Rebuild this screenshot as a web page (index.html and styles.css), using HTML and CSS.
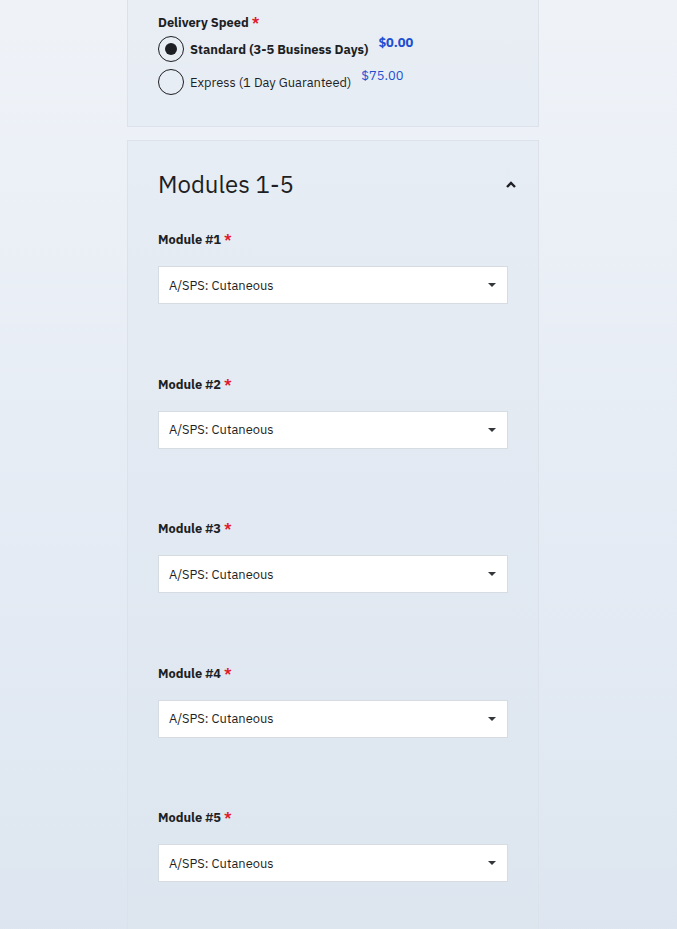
FILE: index.html
```html
<!DOCTYPE html>
<html lang="en">
<head>
<meta charset="utf-8">
<title>Order form</title>
<link rel="stylesheet" href="styles.css">
</head>
<body>
<main class="column">
  <section class="card card-delivery">
    <div class="field-label">Delivery Speed <span class="req">*</span></div>
    <div class="radio-list">
      <label class="radio-row">
        <span class="radio checked"></span>
        <span class="radio-text bold">Standard (3-5 Business Days)</span>
        <span class="price bold">$0.00</span>
      </label>
      <label class="radio-row">
        <span class="radio"></span>
        <span class="radio-text">Express (1 Day Guaranteed)</span>
        <span class="price">$75.00</span>
      </label>
    </div>
  </section>

  <section class="card card-modules">
    <header class="card-head">
      <h2 class="card-title">Modules 1-5</h2>
      <svg class="chevron" width="10" height="7" viewBox="0 0 10 7"><path d="M1 6 L5 2 L9 6" fill="none" stroke="#1d1f24" stroke-width="2.4"/></svg>
    </header>

    <div class="module">
      <div class="field-label">Module #1 <span class="req">*</span></div>
      <div class="select"><span>A/SPS: Cutaneous</span><span class="caret"></span></div>
    </div>
    <div class="module">
      <div class="field-label">Module #2 <span class="req">*</span></div>
      <div class="select"><span>A/SPS: Cutaneous</span><span class="caret"></span></div>
    </div>
    <div class="module">
      <div class="field-label">Module #3 <span class="req">*</span></div>
      <div class="select"><span>A/SPS: Cutaneous</span><span class="caret"></span></div>
    </div>
    <div class="module">
      <div class="field-label">Module #4 <span class="req">*</span></div>
      <div class="select"><span>A/SPS: Cutaneous</span><span class="caret"></span></div>
    </div>
    <div class="module">
      <div class="field-label">Module #5 <span class="req">*</span></div>
      <div class="select"><span>A/SPS: Cutaneous</span><span class="caret"></span></div>
    </div>
  </section>
</main>
</body>
</html>
```

FILE: styles.css
```css
html, body {
  margin: 0;
  padding: 0;
}
body {
  min-height: 929px;
  background: linear-gradient(180deg, #eff3f8 0%, #e7edf5 45%, #dde6f0 100%);
  font-family: "IBM Plex Sans", "Noto Sans", "Liberation Sans", sans-serif;
  color: #1d1f24;
  overflow: hidden;
}
.column {
  width: 412px;
  margin-left: 127px;
  display: flex;
  flex-direction: column;
  gap: 13px;
}
.card {
  box-sizing: border-box;
  background: rgba(222, 228, 238, 0.35);
  border: 1px solid #dde2ea;
}
.card-delivery {
  border-top: none;
  padding: 15px 30px 22px;
  height: 127px;
}
.field-label {
  font-size: 12.8px;
  font-weight: 700;
  line-height: 16px;
  color: #1d1f24;
}
.req {
  color: #e0182d;
}
.radio-list {
  display: flex;
  flex-direction: column;
  gap: 7px;
  margin-top: 5px;
}
.radio-row {
  display: flex;
  align-items: center;
  height: 26px;
  font-size: 12.9px;
}
.radio {
  box-sizing: border-box;
  width: 26px;
  height: 26px;
  border: 1.5px solid #1d1f24;
  border-radius: 50%;
  display: flex;
  align-items: center;
  justify-content: center;
  flex: none;
}
.radio.checked::after {
  content: "";
  width: 12px;
  height: 12px;
  border-radius: 50%;
  background: #1d1f24;
}
.radio-text {
  margin-left: 6px;
  color: #1d1f24;
}
.bold {
  font-weight: 700;
}
.price {
  margin-left: 10px;
  align-self: flex-start;
  margin-top: -2px;
  color: #1f4fd1;
}
.card-modules {
  padding: 25px 30px 40px;
  min-height: 800px;
}
.card-head {
  display: flex;
  align-items: center;
  justify-content: space-between;
  margin-right: -8px;
}
.card-title {
  margin: 0;
  font-size: 24px;
  font-weight: 400;
  line-height: 36px;
  color: #1d1f24;
}
.chevron {
  display: block;
}
.module {
  display: flex;
  flex-direction: column;
  gap: 18px;
  margin-top: 30px;
}
.card-modules .module + .module {
  margin-top: 72.5px;
}
.select {
  box-sizing: border-box;
  width: 350px;
  height: 38px;
  background: #fff;
  border: 1px solid #d7dbe2;
  display: flex;
  align-items: center;
  justify-content: space-between;
  padding: 0 11px 0 10px;
  font-size: 12.9px;
  color: #1d1f24;
}
.caret {
  width: 0;
  height: 0;
  border-left: 4.5px solid transparent;
  border-right: 4.5px solid transparent;
  border-top: 4px solid #33363b;
}
```
